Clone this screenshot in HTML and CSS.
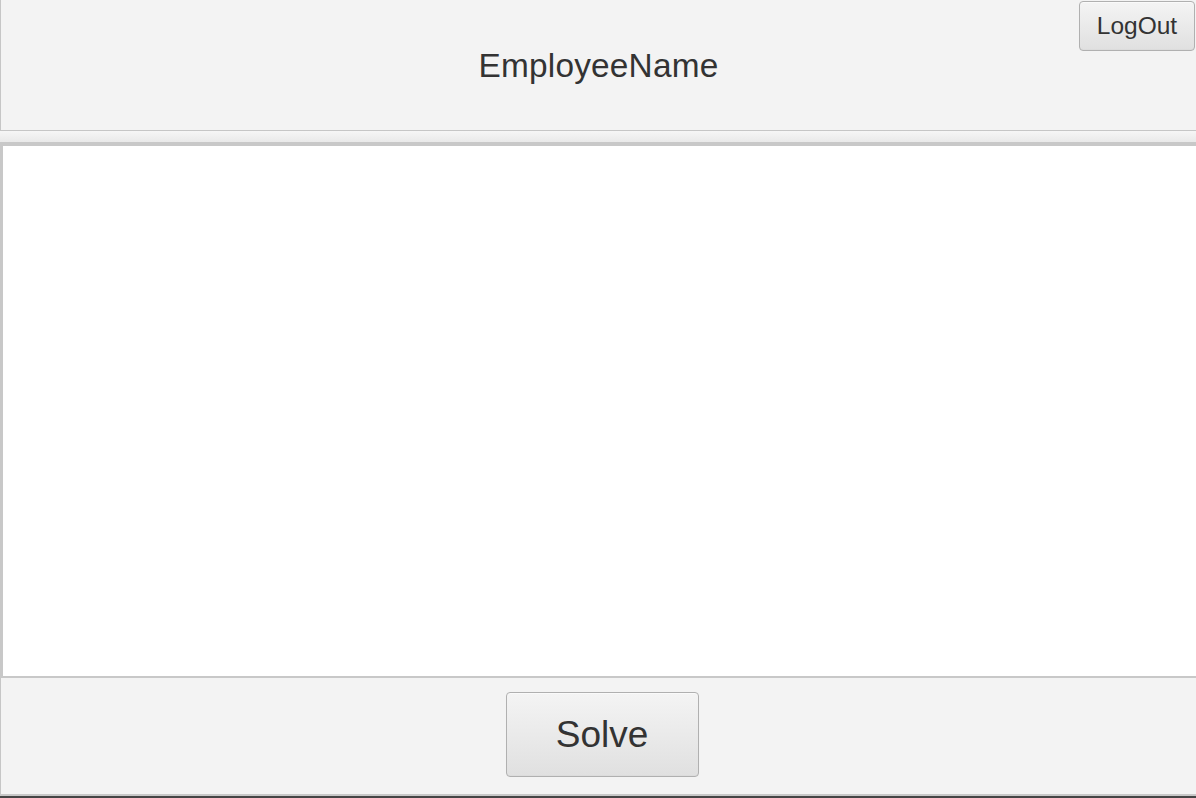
FILE: index.html
```html
<!DOCTYPE html>
<html>
<head>
<meta charset="utf-8">
<link rel="stylesheet" href="styles.css">
</head>
<body>
<div class="window">
  <header class="header">
    <div class="header-spacer"></div>
    <div class="title">EmployeeName</div>
    <div class="header-actions">
      <button class="btn btn-logout">LogOut</button>
    </div>
  </header>
  <div class="divider"></div>
  <main class="content"></main>
  <footer class="footer">
    <button class="btn btn-solve">Solve</button>
  </footer>
  <div class="bottom-edge"></div>
</div>
</body>
</html>
```
FILE: styles.css
```css
html, body {
  margin: 0;
  padding: 0;
  height: 100%;
  background: #f3f3f3;
}
.window {
  height: 798px;
  display: flex;
  flex-direction: column;
  font-family: "Liberation Sans", Arial, sans-serif;
  color: #333333;
}
.header {
  height: 130px;
  flex: none;
  display: grid;
  grid-template-columns: 1fr auto 1fr;
  align-items: center;
  background: #f3f3f3;
  border-left: 1px solid #c6c6c6;
  box-sizing: border-box;
}
.title {
  font-size: 33.4px;
  padding-top: 2px;
  letter-spacing: 0.2px;
}
.header-actions {
  align-self: start;
  display: flex;
  justify-content: flex-end;
  padding-top: 1px;
  padding-right: 1px;
}
.divider {
  flex: none;
  height: 11px;
  border-top: 1px solid #c6c6c6;
  border-bottom: 4px solid #c8c8c8;
  background: linear-gradient(#f6f6f6, #e9e9e9);
}
.content {
  flex: 1;
  background: #ffffff;
  border-left: 3px solid #c8c8c8;
  border-bottom: 2px solid #c8c8c8;
}
.footer {
  height: 118px;
  flex: none;
  box-sizing: border-box;
  display: flex;
  justify-content: center;
  align-items: flex-start;
  padding-top: 14px;
  padding-left: 7px;
  background: #f3f3f3;
  border-left: 1px solid #c6c6c6;
  border-bottom: 2px solid #c8c8c8;
}
.bottom-edge {
  flex: none;
  height: 2px;
  background: #454545;
}
.btn {
  font-family: "Liberation Sans", Arial, sans-serif;
  color: #333333;
  border: 1px solid #b0b0b0;
  border-radius: 4px;
  background: linear-gradient(#f4f4f4, #e0e0e0);
  box-shadow: inset 0 1px 0 #fafafa, inset 0 -1px 0 #dcdcdc;
  padding: 0;
  margin: 0;
  cursor: default;
}
.btn-logout {
  width: 116px;
  height: 50px;
  font-size: 24.5px;
}
.btn-solve {
  width: 193px;
  height: 85px;
  font-size: 37px;
}
```
